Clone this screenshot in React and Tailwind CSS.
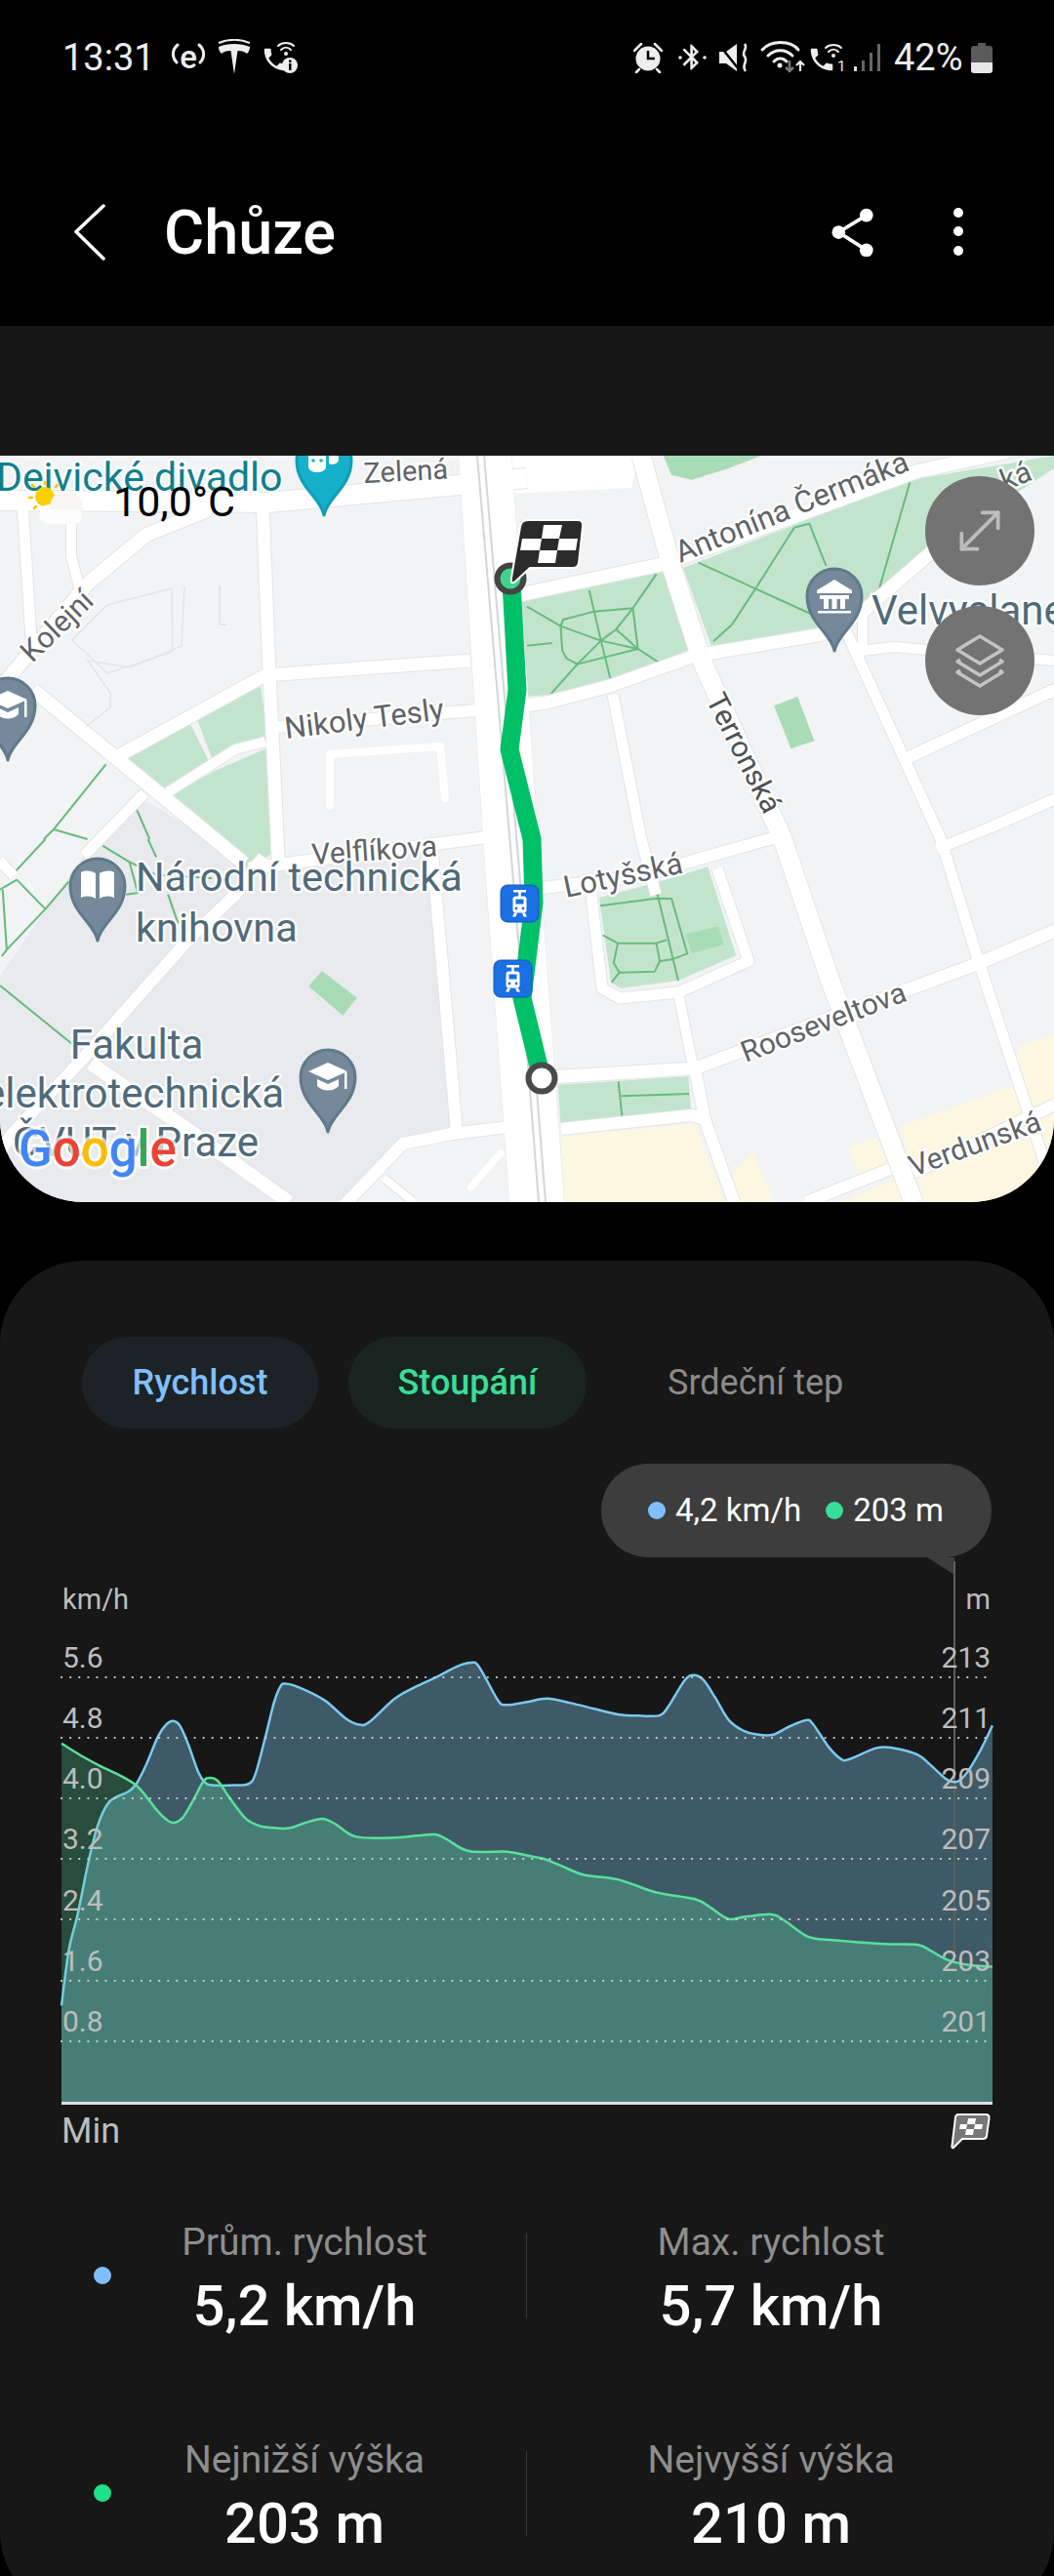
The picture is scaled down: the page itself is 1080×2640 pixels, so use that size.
import React from "react";
import { MoveDiagonal } from "lucide-react";

const FONT = "font-['Roboto','Liberation_Sans',sans-serif]";

/* ---------- chart data (traced) ---------- */
const lb = [[183,1190],[205,1040],[230,950],[262,810],[290,710],[320,650],[345,632],[380,618],[405,597],[435,545],[470,470],[495,437],[515,428],[535,440],[560,490],[590,565],[610,592],[630,600],[700,600],[740,596],[760,570],[790,470],[815,380],[835,335],[850,328],[890,338],[965,372],[1030,422],[1070,438],[1100,430],[1175,368],[1240,335],[1300,310],[1360,282],[1400,272],[1425,282],[1480,370],[1505,385]];
const rb = [[0,377],[60,368],[130,380],[200,395],[270,410],[340,414],[395,413],[420,390],[470,318],[497,305],[525,318],[560,365],[600,425],[640,452],[680,463],[730,465],[780,443],[830,426],[850,435],[900,500],[935,530],[960,530],[1040,500],[1090,500],[1160,517],[1200,545],[1250,585],[1280,590],[1310,565],[1350,505],[1385,440]];
const lg = [[183,488],[240,520],[295,547],[360,575],[405,600],[435,630],[470,670],[500,695],[520,700],[545,685],[575,640],[605,590],[625,580],[650,590],[680,630],[730,688],[770,708],[810,714],[860,715],[910,700],[960,690],[1000,705],[1060,738],[1180,740],[1240,735],[1295,732],[1330,745],[1395,776],[1510,778]];
const rg = [[0,788],[50,797],[100,815],[170,840],[270,852],[385,887],[500,905],[550,930],[600,958],[650,952],[730,946],[770,965],[835,1005],[900,1014],[1060,1025],[1160,1027],[1200,1042],[1250,1067],[1320,1082],[1385,1086]];
const toReal = (l, r) => [
  ...l.map(([x, y]) => [x / 2.904, 1600 + y / 2.613]),
  ...r.map(([x, y]) => [540 + x / 2.904, 1600 + y / 2.613]),
];
const smooth = (p) => {
  let d = `M${p[0][0].toFixed(1)} ${p[0][1].toFixed(1)}`;
  for (let i = 0; i < p.length - 1; i++) {
    const a = p[Math.max(i - 1, 0)], b = p[i], c = p[i + 1], e = p[Math.min(i + 2, p.length - 1)];
    const c1 = [b[0] + (c[0] - a[0]) / 6, b[1] + (c[1] - a[1]) / 6];
    const c2 = [c[0] - (e[0] - b[0]) / 6, c[1] - (e[1] - b[1]) / 6];
    d += `C${c1[0].toFixed(1)} ${c1[1].toFixed(1)} ${c2[0].toFixed(1)} ${c2[1].toFixed(1)} ${c[0].toFixed(1)} ${c[1].toFixed(1)}`;
  }
  return d;
};
const blue = smooth(toReal(lb, rb));
const green = smooth(toReal(lg, rg));
const close = " L1017 2155 L63 2155 Z";

/* ---------- map data ---------- */
const roads = [
  [[0,513,275,515,470,497,540,490],20],
  [[117,777,272,692,482,677],13],
  [[285,745,487,728],12],
  [[172,812,241,768,272,760],10],
  [[269,515,276,690,285,880],13],
  [[0,705,90,598,150,548,215,522],14],
  [[23,515,32,655],11],
  [[73,515,73,570,82,605],10],
  [[34,707,220,860,250,885],14],
  [[148,813,86,877],11],
  [[0,882,14,898],10],
  [[255,890,499,858],12],
  [[270,878,241,917,193,963,83,1087,14,1160,0,1180],12],
  [[93,1090,186,1153,296,1232],14],
  [[443,873,468,1160],12],
  [[348,1240,413,1172,463,1162,520,1155],12],
  [[393,1207,424,1232],8],
  [[530,610,680,578,940,483,1090,450],14],
  [[520,725,560,720,625,703,712,672,843,650,884,627,953,567,1010,520],13],
  [[628,712,657,860,672,917],11],
  [[606,918,617,1013,635,1023,695,1017,767,985,735,890],11],
  [[695,1017,710,1093],10],
  [[545,1105,712,1095,760,1077,1001,988,1090,950],13],
  [[575,1157,709,1143,722,1147,752,1232],12],
  [[712,1095,722,1147],12],
  [[657,467,688,580,719,677,802,860,850,1003,936,1232],19],
  [[867,647,964,860,1001,980,1070,1190],11],
  [[884,627,884,667,915,663,1080,677],10],
  [[555,910,640,900,700,885,795,858],12],
  [[927,778,1030,730,1085,705],12],
  [[960,870,1010,850,1090,815],11],
  [[826,1232,912,1198],12],
  [[936,1202,1085,1130],12],
];

const Tile = ({ x, y, children }) => (
  <g transform={`translate(${x} ${y}) scale(.3444 .3333)`}>{children}</g>
);
const P = ({ p }) => <polyline points={p} fill="none" stroke="#68bb7e" strokeWidth="6" strokeLinejoin="round" />;

const Label = ({ x, y, r = 0, size = 29, fill = "#5f6368", weight = 400, anchor = "start", children }) => (
  <text
    x={x}
    y={y}
    transform={r ? `rotate(${r} ${x} ${y})` : undefined}
    fontSize={size}
    fontWeight={weight}
    fill={fill}
    stroke="#ffffff"
    strokeWidth="5"
    strokeOpacity=".85"
    strokeLinejoin="round"
    paintOrder="stroke"
    textAnchor={anchor}
  >
    {children}
  </text>
);

const Pin = ({ x, y, color = "#75899a", edge = "#5f7a8b", children }) => (
  <g transform={`translate(${x} ${y})`}>
    <path d="M0 56C-3 38-28 27-28 0A28 28 0 1 1 28 0C28 27 3 38 0 56Z" fill={color} stroke={edge} strokeWidth="3" strokeLinejoin="round" />
    {children}
  </g>
);
const CapIcon = () => (
  <g fill="#fff">
    <path d="M0-15L20-6 0 3-20-6Z" />
    <path d="M-11 2L0 7 11 2V9C5 15-5 15-11 9Z" />
    <rect x="17" y="-5" width="2.5" height="17" />
  </g>
);

const Tram = ({ x, y }) => (
  <g transform={`translate(${x} ${y})`}>
    <rect x="0" y="0" width="39" height="38" rx="7" fill="#1a6fe3" stroke="#1558bd" strokeWidth="1" />
    <rect x="13" y="5" width="13" height="2.5" fill="#fff" />
    <rect x="18.200" y="7" width="2.600" height="5" fill="#fff" />
    <rect x="12.500" y="11.500" width="14" height="17" rx="3" fill="#fff" />
    <rect x="15.500" y="14.500" width="8" height="5" fill="#1a6fe3" />
    <circle cx="16" cy="24" r="1.400" fill="#1a6fe3" />
    <circle cx="23" cy="24" r="1.400" fill="#1a6fe3" />
    <path d="M14 28.500H17L15.500 32.500H12ZM22 28.500H25L27 32.500H23.500Z" fill="#fff" />
  </g>
);

function MapView() {
  return (
    <svg viewBox="0 467 1080 765" className="block w-full h-full" fontFamily="Roboto, 'Liberation Sans', sans-serif">
      <rect x="0" y="467" width="1080" height="765" fill="#f1f3f4" />
      <polygon points="148,820 265,890 440,873 463,1162 413,1172 348,1232 0,1232 0,1000 92,868" fill="#e8eaed" />
      {/* parks */}
      <g fill="#c3e4cc">
        <polygon points="700,582 933,492 1080,467 1080,480 953,563 898,617 843,645 731,668" />
        <polygon points="535,613 679,586 709,667 626,698 564,712 535,714" />
        <polygon points="267,703 276,765 237,770 220,785 202,737" />
        <polygon points="195,742 215,782 164,810 127,779" />
        <polygon points="220,790 273,767 285,870 250,895 210,860 171,817" />
      </g>
      <Tile x={540} y={860}>
        <polygon points="215,180 380,135 538,85 622,358 448,435 280,458 250,442" fill="#c3e4cc" />
        <polygon points="92,755 480,730 488,832 100,872" fill="#c3e4cc" />
        <polygon points="472,292 570,268 585,325 490,352" fill="#a9dcb6" />
        <polygon points="103,913 500,875 590,1115 110,1115" fill="#fdf6e0" />
        <polygon points="600,1040 672,960 735,1115 620,1115" fill="#fdf6e0" />
        <polygon points="958,950 1040,915 1085,1010 990,1045" fill="#fdf6e0" />
        <polygon points="925,1115 1095,1048 1120,1115" fill="#fdf6e0" />
        <polygon points="1105,885 1450,755 1460,640 1568,600 1568,1115 1180,1115 1150,1020" fill="#fdf6e0" />
        <P p="218,205 385,182 430,183 477,352 430,370 395,375" />
        <P p="380,135 450,435" />
        <P p="225,295 270,320 385,320 415,310" />
        <P p="270,320 258,380 275,410 380,407 395,375 385,320" />
        <P p="275,410 252,440" />
        <P p="272,745 283,855" />
        <P p="280,790 482,783" />
      </Tile>
      <Tile x={540} y={460}>
        <polygon points="405,20 700,20 600,60 490,95 430,80" fill="#a9dcb6" />
        <polygon points="735,790 805,762 855,898 785,922" fill="#a9dcb6" />
        <P p="0,485 100,545 220,590 330,615 405,665 490,620" />
        <P p="100,545 108,525 200,500 315,490 385,385" />
        <P p="185,435 200,500 220,590 250,715" />
        <P p="315,490 330,615 150,662 70,755" />
        <P p="315,490 265,555 220,590 150,662" />
        <P p="265,555 330,615" />
        <P p="100,545 105,620 118,645 150,662" />
        <P p="0,605 75,597" />
        <P p="510,350 680,430 850,510" />
        <P p="795,242 840,230 890,360" />
        <P p="795,242 680,430 610,540 555,592" />
        <P p="1140,100 1045,440" />
      </Tile>
      <Tile x={0} y={860}>
        <polygon points="918,452 958,405 1062,488 1020,542" fill="#a9dcb6" />
      </Tile>
      <g fill="none" strokeLinejoin="round">
        <Tile x={0} y={460}>
          <P p="315,970 160,1170 130,1200" />
          <P p="160,1170 260,1200" />
          <P p="405,1105 445,1200" />
        </Tile>
        <Tile x={0} y={860}>
          <P p="135,0 45,100" />
          <P p="0,155 50,125 135,215" />
          <P p="8,155 20,340 135,215 205,130" />
          <P p="305,20 385,70 410,165 375,170" />
          <P p="385,70 465,110 630,120" />
          <P p="440,0 465,55" />
          <P p="500,170 530,260" />
          <P p="0,450 215,630" />
          <P p="20,340 5,360" />
        </Tile>
      </g>
      {/* white road plates */}
      <polygon points="470,467 654,467 647,500 540,505 470,507" fill="#ffffff" />
      <polygon points="470,467 524,467 555,917 578,1232 522,1232 496,872" fill="#ffffff" stroke="#e2e4e7" strokeWidth="1" />
      {roads.map(([pts, w], i) => (
        <polyline key={`c${i}`} points={pts.join(",")} fill="none" stroke="#e2e4e7" strokeWidth={w + 2} strokeLinejoin="round" />
      ))}
      {roads.map(([pts, w], i) => (
        <polyline key={`r${i}`} points={pts.join(",")} fill="none" stroke="#ffffff" strokeWidth={w} strokeLinejoin="round" />
      ))}
      <polygon points="470,467 524,467 555,917 578,1232 522,1232 496,872" fill="#ffffff" />
      <polyline points="338,825 338,773 451,765 456,818" fill="none" stroke="#fff" strokeWidth="8" strokeLinecap="round" strokeLinejoin="round" />
      <polyline points="482,1217 513,1182" fill="none" stroke="#fff" strokeWidth="7" strokeLinecap="round" />
      <polyline points="225,600 225,640 232,640" fill="none" stroke="#dfe1e4" strokeWidth="1.5" />
      <polyline points="176,603 177,668 110,690 74,656 110,620 176,603" fill="none" stroke="#e2e4e7" strokeWidth="1.5" />
      <polyline points="189,601 186,662 134,684 90,677 113,710 113,725 88,745" fill="none" stroke="#e2e4e7" strokeWidth="1.5" />
      {/* rail tracks */}
      <polyline points="489,467 530,950 544,1130 552,1232" fill="none" stroke="#d4d6da" strokeWidth="2" />
      <polyline points="496,467 537,950 551,1130 559,1232" fill="none" stroke="#d4d6da" strokeWidth="2" />

      {/* route */}
      <polyline points="524,597 530,707 522,768 545,860 547,925 535,1023 555,1105" fill="none" stroke="#00c067" strokeWidth="19" strokeLinejoin="round" />

      {/* labels */}
      <Label x={-4} y={503} size={41} fill="#0f7f8e">Dejvické divadlo</Label>
      <Label x={373} y={495} r={-3} size={29}>Zelená</Label>
      <Label x={33} y={680} r={-44} size={30}>Kolejní</Label>
      <Label x={293} y={757} r={-7} size={31}>Nikoly Tesly</Label>
      <Label x={320} y={886} r={-4} size={30}>Velflíkova</Label>
      <Label x={139} y={913} size={41.500} fill="#4f6a7a">Národní technická</Label>
      <Label x={139} y={965} size={41.500} fill="#4f6a7a">knihovna</Label>
      <Label x={140} y={1085} size={42} fill="#4f6a7a" anchor="middle">Fakulta</Label>
      <Label x={137} y={1135} size={42} fill="#4f6a7a" anchor="middle">elektrotechnická</Label>
      <Label x={139} y={1185} size={42} fill="#4f6a7a" anchor="middle">ČVUT v Praze</Label>
      <Label x={697} y={577} r={-22} size={31}>Antonína Čermáka</Label>
      <Label x={1030} y={503} r={-22} size={30}>ká</Label>
      <Label x={893} y={640} size={42} fill="#4f6a7a">Velvyslanectví</Label>
      <Label x={723} y={717} r={63} size={30} fill="#4c5054">Terronská</Label>
      <Label x={580} y={920} r={-12} size={31}>Lotyšská</Label>
      <Label x={764} y={1089} r={-21} size={30}>Rooseveltova</Label>
      <Label x={936} y={1206} r={-20} size={30}>Verdunská</Label>

      {/* weather */}
      <circle cx="46" cy="509" r="10" fill="#fbd000" />
      <g stroke="#f0c814" strokeWidth="2.5" strokeLinecap="round">
        <path d="M46 494V496M33 497L35 499M59 497L57 499M30 510H33M35 521L37 519" />
      </g>
      <g fill="#fdfdfd">
        <circle cx="50" cy="527" r="10" />
        <circle cx="68" cy="520" r="17" fill="#f8f6f4" />
        <rect x="42" y="522" width="42" height="15" rx="7" />
      </g>
      <text x="116" y="529" fontSize="43" fill="#000">10,0°C</text>

      {/* pins */}
      <Pin x={332} y={472} color="#16b0cb" edge="#0f9db8">
        <path d="M-16-6H2V6C2 14-16 14-16 6Z" fill="#fff" />
        <path d="M5-12H15V-2C15 4 8 5 5 3Z" fill="#fff" />
        <circle cx="-11" cy="0" r="1.8" fill="#16b0cb" />
        <circle cx="-3" cy="0" r="1.8" fill="#16b0cb" />
      </Pin>
      <Pin x={8} y={723}><CapIcon /></Pin>
      <Pin x={100} y={908}>
        <path d="M-2-13C-8-16-13-16-17-14V12C-11 10-7 10-2 13ZM2-13C8-16 13-16 17-14V12C11 10 7 10 2 13Z" fill="#fff" />
      </Pin>
      <Pin x={336} y={1104}><CapIcon /></Pin>
      <Pin x={855} y={611}>
        <g fill="#fff">
          <path d="M0-17L18-6V-3H-18V-6Z" />
          <path d="M-15-1H15V3H11V13H6V3H2.500V13H-2.500V3H-6V13H-11V3H-15Z" />
          <rect x="-17" y="15" width="34" height="2.500" />
        </g>
      </Pin>

      <Tram x={513} y={907} />
      <Tram x={506} y={984} />

      {/* start marker */}
      <circle cx="555" cy="1105" r="13.500" fill="#fff" stroke="#4a4a4a" strokeWidth="6" />
      {/* finish marker + flag */}
      <circle cx="523" cy="593" r="13.500" fill="#3dd58b" stroke="#444" strokeWidth="6" />
      <path d="M541 533H592Q598 533 597 540L593 577Q592 582 587 582H543L528 596Q523 600 524 592L533 540Q534 533 541 533Z" fill="#2b2b2b" stroke="#ffffff" strokeWidth="2" strokeLinejoin="round" />
      <g fill="#ffffff">
        <polygon points="557,538 576,538 573,552 555,552" />
        <polygon points="535,552 555,552 553,564 533,564" />
        <polygon points="573,552 592,552 590,564 571,564" />
        <polygon points="553,564 571,564 569,577 551,577" />
      </g>

      {/* google logo */}
      <text x="19" y="1195" fontSize="51" fontWeight="500" stroke="#ffffff" strokeWidth="6" strokeOpacity=".7" strokeLinejoin="round" paintOrder="stroke">
        <tspan fill="#4285f4">G</tspan>
        <tspan fill="#ea4335">o</tspan>
        <tspan fill="#fbbc05">o</tspan>
        <tspan fill="#4285f4">g</tspan>
        <tspan fill="#34a853">l</tspan>
        <tspan fill="#ea4335">e</tspan>
      </text>
    </svg>
  );
}

function StatusLeft() {
  return (
    <svg width="132" height="38" viewBox="176 41 132 38" className="block">
      {/* e icon */}
      <g fill="none" stroke="#eee" strokeWidth="3" strokeLinecap="round">
        <path d="M182 47C176 52 176 60 181 65" />
        <path d="M204 47C210 52 210 60 205 65" />
      </g>
      <text x="193" y="71" fontSize="33" fontWeight="500" fill="#eee" textAnchor="middle" fontFamily="Roboto, sans-serif">e</text>
      {/* tesla */}
      <path d="M240 77L236.500 53C232 53 229 54 227 56C225 54 224 52 224 49C233 45 247 45 256 49C256 52 255 54 253 56C251 54 248 53 243.500 53Z" fill="#eee" />
      <path d="M224 45C234 41 246 41 256 45" fill="none" stroke="#eee" strokeWidth="2" />
      {/* phone wifi info */}
      <g transform="translate(267 47) scale(1.25)" fill="#eee">
        <path d="M6.62 10.79c1.44 2.83 3.76 5.14 6.59 6.59l2.2-2.2c.27-.27.67-.36 1.02-.24 1.12.37 2.33.57 3.57.57.55 0 1 .45 1 1V20c0 .55-.45 1-1 1-9.39 0-17-7.61-17-17 0-.55.45-1 1-1h3.500c.55 0 1 .45 1 1 0 1.25.2 2.45.57 3.57.11.35.03.74-.25 1.02l-2.2 2.2z" />
      </g>
      <g fill="none" stroke="#eee" strokeWidth="2" strokeLinecap="round">
        <path d="M285 48C289 44 297 44 301 48" />
        <path d="M288 52C291 49 295 49 298 52" />
      </g>
      <circle cx="293" cy="56" r="2" fill="#eee" />
      <circle cx="297" cy="68" r="8" fill="#eee" />
      <rect x="296" y="66" width="2.500" height="7" fill="#000" />
      <rect x="296" y="62.500" width="2.500" height="2.500" fill="#000" />
    </svg>
  );
}

function StatusRight() {
  return (
    <svg width="256" height="38" viewBox="649 40 256 38" className="block">
      {/* alarm */}
      <circle cx="664" cy="60" r="12.500" fill="#eee" />
      <path d="M664 52V60H671" fill="none" stroke="#000" strokeWidth="2.500" />
      <path d="M650 52L657 45M678 52L671 45M655 71L652 74M673 71L676 74" stroke="#eee" strokeWidth="2.500" strokeLinecap="round" />
      {/* bluetooth */}
      <g transform="translate(693 43) scale(1.3)" fill="#eee">
        <path d="M17.71 7.71L12 2h-1v7.59L6.41 5 5 6.41 10.59 12 5 17.59 6.41 19 11 14.41V22h1l5.71-5.71-4.3-4.29 4.3-4.29zM13 5.830l1.88 1.88L13 9.590V5.830zm1.88 10.46L13 18.170v-3.760l1.88 1.880z" />
      </g>
      <circle cx="697" cy="59" r="1.800" fill="#eee" />
      <circle cx="722" cy="59" r="1.800" fill="#eee" />
      {/* mute + vibration */}
      <path d="M737 53H744L755 45V73L744 65H737Z" fill="#eee" />
      <path d="M737 46L757 71" stroke="#000" strokeWidth="2.500" />
      <path d="M763 45C767 50 759 53 763 58C767 63 759 67 764 73" fill="none" stroke="#eee" strokeWidth="2.600" />
      {/* wifi */}
      <g fill="none" strokeLinecap="round" strokeWidth="3">
        <path d="M781 51C790 41 810 41 818 51" stroke="#eee" />
        <path d="M787 57C794 50 805 50 812 57" stroke="#eee" />
        <path d="M793 63C797 59 802 59 806 63" stroke="#eee" />
      </g>
      <circle cx="799" cy="67" r="2.500" fill="#eee" />
      <path d="M809 62V73M805 69L809 73L813 69" fill="none" stroke="#777" strokeWidth="2.500" />
      <path d="M820 73V63M816 67L820 63L824 67" fill="none" stroke="#eee" strokeWidth="2.200" />
      {/* phone + wifi + 1 */}
      <g transform="translate(827 46) scale(1.25)" fill="#eee">
        <path d="M6.62 10.79c1.44 2.83 3.76 5.14 6.59 6.59l2.2-2.2c.27-.27.67-.36 1.02-.24 1.12.37 2.33.57 3.57.57.55 0 1 .45 1 1V20c0 .55-.45 1-1 1-9.39 0-17-7.61-17-17 0-.55.45-1 1-1h3.500c.55 0 1 .45 1 1 0 1.25.2 2.45.57 3.57.11.35.03.74-.25 1.02l-2.2 2.2z" />
      </g>
      <g fill="none" stroke="#eee" strokeWidth="2" strokeLinecap="round">
        <path d="M846 49C850 45 858 45 862 49" />
        <path d="M849 53C852 50 856 50 859 53" />
      </g>
      <circle cx="854" cy="57" r="2" fill="#eee" />
      <text x="858" y="73" fontSize="15" fill="#eee" fontFamily="Roboto, sans-serif">1</text>
      {/* signal */}
      <rect x="875" y="68" width="3" height="5" fill="#ddd" />
      <rect x="883" y="62" width="3" height="11" fill="#666" />
      <rect x="891" y="54" width="3" height="19" fill="#666" />
      <rect x="899" y="45" width="3" height="28" fill="#666" />
    </svg>
  );
}

const Stat = ({ dot, a, av, b, bv }) => (
  <div className="flex items-center h-[117px] pl-[96px]">
    <div className={`w-[18px] h-[18px] rounded-full mb-[9px] ${dot}`} />
    <div className="w-[396px] text-center">
      <div className="text-[39px] leading-[40px] text-[#8e8e8e]">{a}</div>
      <div className="mt-[13px] text-[58px] leading-[64px] font-medium text-white">{av}</div>
    </div>
    <div className="ml-[29px] w-[1px] h-[87px] mb-[8px] bg-[#3a3a3a]" />
    <div className="w-[500px] text-center">
      <div className="text-[39px] leading-[40px] text-[#8e8e8e]">{b}</div>
      <div className="mt-[13px] text-[58px] leading-[64px] font-medium text-white">{bv}</div>
    </div>
  </div>
);

const gridY = [1719, 1781, 1843, 1905, 1967, 2030, 2092];
const leftL = [["5.6", 1709], ["4.8", 1771], ["4.0", 1833], ["3.2", 1895], ["2.4", 1958], ["1.6", 2020], ["0.8", 2082]];
const rightL = [["213", 1709], ["211", 1771], ["209", 1833], ["207", 1895], ["205", 1958], ["203", 2020], ["201", 2082]];

function Chart() {
  return (
    <svg viewBox="0 1596 1080 562" className="block w-full h-[562px]" fontFamily="Roboto, 'Liberation Sans', sans-serif">
      <polygon points="950,1596 978,1596 978,1614" fill="#3d3d3d" />
      <path d={blue + close} fill="#3e5a67" />
      <line x1="978" x2="978" y1="1600" y2="2010" stroke="#5a5f62" strokeWidth="2" />
      <path d={blue} fill="none" stroke="#7cc8ee" strokeWidth="2.500" />
      <path d={green + close} fill="#5ee2a2" fillOpacity=".27" />
      <path d={green} fill="none" stroke="#59e09a" strokeWidth="2.500" />
      {gridY.map((y) => (
        <line key={y} x1="63" x2="1012" y1={y} y2={y} stroke="#d4d4d4" strokeWidth="2.200" strokeLinecap="round" strokeDasharray="0.1 9" />
      ))}
      <rect x="63" y="2154" width="954" height="3" fill="#dedede" />
      <text x="64" y="1649" fontSize="29" fill="#bdbdbd">km/h</text>
      <text x="1015" y="1649" fontSize="29" fill="#bdbdbd" textAnchor="end">m</text>
      {leftL.map(([t, y]) => (
        <text key={t} x="64" y={y} fontSize="30" fill="#bdbdbd">{t}</text>
      ))}
      {rightL.map(([t, y]) => (
        <text key={t} x="1015" y={y} fontSize="30" fill="#bdbdbd" textAnchor="end">{t}</text>
      ))}
    </svg>
  );
}

export default function App() {
  return (
    <div className={`${FONT} w-[1080px] h-[2640px] overflow-hidden bg-black`}>
      {/* header */}
      <header className="h-[334px] bg-black flex flex-col">
        <div className="h-[38px] mt-[40px] flex items-center pl-[64px] pr-[63px] text-[38px] leading-[38px] text-[#ececec]">
          <span className="w-[112px]">13:31</span>
          <StatusLeft />
          <span className="flex-1" />
          <StatusRight />
          <span className="ml-[11px] w-[79px]">42%</span>
          <svg width="22" height="32" viewBox="0 0 22 32" className="block">
            <path d="M7 1H15V4H19Q22 4 22 7V21H0V7Q0 4 3 4H7Z" fill="#5a5a5a" />
            <path d="M0 21H22V29Q22 32 19 32H3Q0 32 0 29Z" fill="#e8e8e8" />
          </svg>
        </div>
        <div className="h-[80px] mt-[120px] flex items-center pl-[76px] pr-[92px]">
          <svg width="36" height="58" viewBox="0 0 36 58" fill="none" className="block">
            <path d="M32 2L4 28.500L32 56" stroke="#fff" strokeWidth="3.500" strokeLinecap="round" strokeLinejoin="round" transform="translate(-2 0)" />
          </svg>
          <span className="ml-[56px] pt-[2px] text-[63px] leading-[80px] font-medium text-white">Chůze</span>
          <span className="flex-1" />
          <svg width="44" height="50" viewBox="0 0 48 54" className="block">
            <g fill="#fff">
              <circle cx="39" cy="8" r="7.500" />
              <circle cx="8" cy="27" r="7.500" />
              <circle cx="39" cy="47" r="7.500" />
            </g>
            <path d="M39 8L8 27L39 47" fill="none" stroke="#fff" strokeWidth="4" />
          </svg>
          <svg width="12" height="52" viewBox="0 0 12 52" className="block ml-[80px]">
            <g fill="#fff">
              <circle cx="6" cy="6" r="5" />
              <circle cx="6" cy="25" r="5" />
              <circle cx="6" cy="45" r="5" />
            </g>
          </svg>
        </div>
      </header>
      <div className="h-[133px] bg-[#171717]" />

      {/* map */}
      <section className="relative h-[765px] rounded-b-[85px] overflow-hidden">
        <MapView />
        <button className="absolute left-[948px] top-[21px] w-[112px] h-[112px] rounded-full bg-[#737373] flex items-center justify-center">
          <MoveDiagonal size={64} color="#bdbdbd" strokeWidth={1.4} />
        </button>
        <button className="absolute left-[948px] top-[154px] w-[112px] h-[112px] rounded-full bg-[#737373] flex items-center justify-center">
          <svg width="52" height="56" viewBox="0 0 52 56" fill="none" stroke="#c4c4c4" strokeWidth="3.500" strokeLinejoin="round">
            <path d="M26 3L49 17L26 31L3 17Z" />
            <path d="M6 27L3 29L26 43L49 29L46 27" />
            <path d="M6 38L3 40L26 54L49 40L46 38" />
          </svg>
        </button>
      </section>

      {/* panel */}
      <section className="mt-[60px] h-[1388px] rounded-[85px] bg-[#171717] text-white">
        <div className="pt-[78px] pl-[84px] flex gap-[31px] text-[36px] leading-[94px] font-medium">
          <div className="h-[94px] w-[242px] text-center rounded-full bg-[#1c2226] text-[#7fbffc]">Rychlost</div>
          <div className="h-[94px] w-[244px] text-center rounded-full bg-[#1a2421] text-[#38dd98]">Stoupání</div>
          <div className="h-[94px] px-[52px] rounded-full text-[#8a8a8a] font-normal">Srdeční tep</div>
        </div>
        <div className="mt-[36px] flex justify-end pr-[64px]">
          <div className="h-[96px] w-[400px] rounded-[48px] bg-[#3d3d3d] flex items-center pl-[48px] text-[33px]">
            <span className="w-[18px] h-[18px] rounded-full bg-[#7fbffc]" />
            <span className="ml-[10px]">4,2 km/h</span>
            <span className="ml-[25px] w-[18px] h-[18px] rounded-full bg-[#38dd98]" />
            <span className="ml-[10px]">203 m</span>
          </div>
        </div>
        <Chart />
        <div className="h-[44px] mt-[4px] pl-[63px] pr-[65px] flex items-center justify-between">
          <span className="text-[36px] leading-[44px] text-[#bdbdbd]">Min</span>
          <svg width="41" height="37" viewBox="0 0 41 37" className="block">
            <path d="M8 1H36Q40 1 39.500 5L37 23Q36.500 26 33 26H12L3 35Q1 36 1.500 33L5 4Q5.500 1 8 1Z" fill="#777" stroke="#fff" strokeWidth="2" strokeLinejoin="round" />
            <g fill="#fff">
              <polygon points="18,5 26,5 25,11 17,11" />
              <polygon points="10,11 17,11 16,16 9,16" />
              <polygon points="25,11 33,11 32,16 24,16" />
              <polygon points="16,16 24,16 23,22 15,22" />
            </g>
          </svg>
        </div>
        <div className="mt-[72px]">
          <Stat dot="bg-[#7fbffc]" a="Prům. rychlost" av="5,2 km/h" b="Max. rychlost" bv="5,7 km/h" />
          <div className="mt-[106px]">
            <Stat dot="bg-[#1fe08b]" a="Nejnižší výška" av="203 m" b="Nejvyšší výška" bv="210 m" />
          </div>
        </div>
      </section>
    </div>
  );
}
